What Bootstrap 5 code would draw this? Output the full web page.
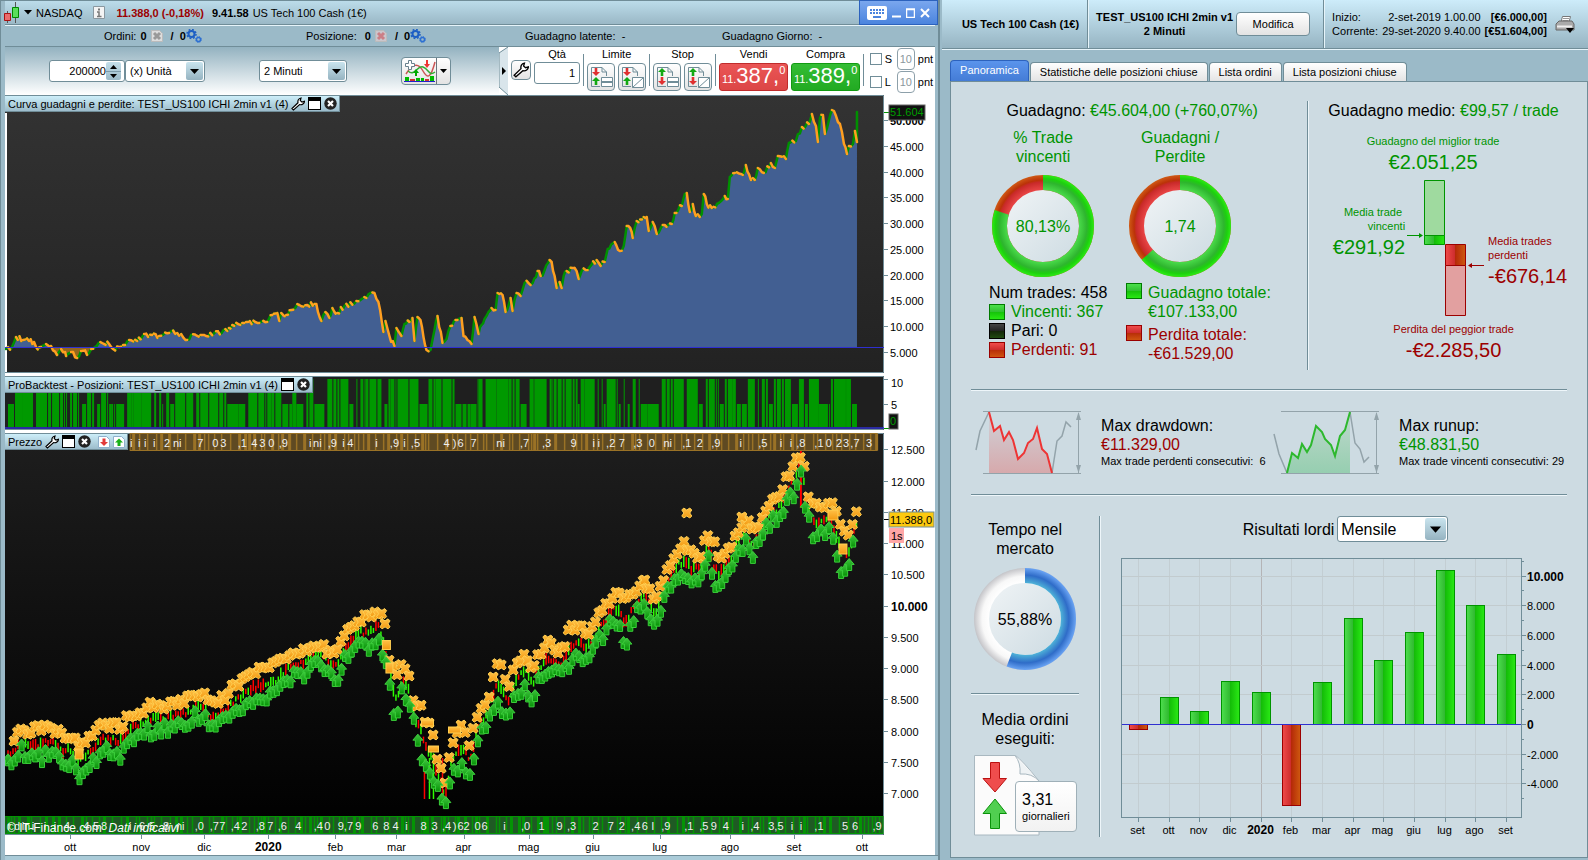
<!DOCTYPE html>
<html lang="it">
<head>
<meta charset="utf-8">
<meta name="viewport" content="width=device-width, initial-scale=1">
<title>NASDAQ - ProBacktest</title>
<link rel="stylesheet" href="https://cdn.jsdelivr.net/npm/bootstrap@5.3.0/dist/css/bootstrap.min.css">
<style>
:root{--steel:#9bbac8;--line:#708d98;--up:#009400;--down:#9c0000;--pane:#cddbe2}
body{font:11px/14px "Liberation Sans",Arial,sans-serif;color:#000;background:var(--steel);min-height:100vh}
svg{display:block}
svg text{font-family:"Liberation Sans",Arial,sans-serif}
.t-up{color:var(--up)}.t-down{color:var(--down)}
.app-left{flex:0 0 59.2%;min-width:0;border-left:1px solid var(--line);border-right:2px solid var(--line);padding:0 3px 0 4px;box-shadow:inset 0 1px 0 var(--line)}
.app-right{min-width:0;margin-left:2px}
.titlebar{height:25px;background:linear-gradient(#bcdcea,#9ab8c6);border-top:1px solid var(--line);border-bottom:1px solid var(--line)}
.winbtns{width:79px;height:25px;background:linear-gradient(#7aa7ee,#4b84de);border:1px solid #2c62bd;margin-right:-3px}
.winbtns button,.bare{background:none;border:0;padding:0;line-height:0;color:inherit}
.statusrow{height:22px;background:var(--steel);border-top:1px solid #e6f4fa;border-bottom:1px solid var(--line);padding-left:99px}
.st1{width:202px}.st2{width:219px}.st3{width:197px}
.toolrow{height:48px;background:linear-gradient(#93b2c0,#fff);padding-left:44px}
.spaced{margin-left:54px}
.boxed{height:22px;border:1px solid var(--line);border-radius:3px;background-color:#fff;font-size:11px;line-height:14px;padding:0 4px;color:#000}
.qbox{width:76px}
.qbox input{width:56px;border:0;text-align:right;padding:0;outline:0;font-size:11px;background:none}
.spin{width:15px;height:18px;background:linear-gradient(#c4dfea,#9bbac8);border-radius:2px}
select.picker{appearance:none;background:#fff url("data:image/svg+xml,%3Csvg xmlns='http://www.w3.org/2000/svg' width='17' height='18'%3E%3Cdefs%3E%3ClinearGradient id='g' x2='0' y2='1'%3E%3Cstop stop-color='%23c9e4ee'/%3E%3Cstop offset='1' stop-color='%2395b3c1'/%3E%3C/linearGradient%3E%3C/defs%3E%3Crect width='17' height='18' rx='2' fill='url(%23g)'/%3E%3Cpath d='M4 7h9l-4.500 5z'/%3E%3C/svg%3E") no-repeat right 1px center}
.softbtn{border:1px solid var(--line);border-radius:4px;background:linear-gradient(#fff,#e3e3e3);padding:0;color:#000;font-size:11px;line-height:14px}
.trade{width:436px;background:#fff;padding-right:2px}
.trade .lab{height:15px;text-align:center}
.vsep{width:1px;height:32px;background:var(--line);margin:7px 3px 0}
.ord{width:28px;height:28px;margin-top:1px}
.deal{width:69px;height:28px;border:1px solid #c02c2c;border-radius:3px;color:#fff;background:linear-gradient(#ea5555,#dc4646);padding:0;margin-top:1px;font-size:11px;line-height:24px;white-space:nowrap}
.deal.buy{border-color:#129a12;background:linear-gradient(#34bd34,#22aa22)}
.deal b{font-weight:400;font-size:22px}.deal sup{font-size:11px;top:-9px}
.sl input[type=checkbox]{width:12px;height:12px;margin:0;appearance:none;border:1px solid var(--line);background:#fff}
.sl input[type=text]{width:18px;height:22px;border:1px solid #8da0aa;border-radius:4px;padding:0;text-align:center;color:#8a979d;font-size:11px;background:#fff}
.sl{height:23px;gap:3px}
.charts{background:#fff}
.pane{position:relative}
.pane>svg{position:absolute;left:0;top:0}
.tag{position:absolute;left:0;top:0;height:17px;padding:0 2px 0 3px;gap:3px;background:linear-gradient(#cdeef9,#9cbccb);border:1px solid var(--line);border-left:0;white-space:nowrap;z-index:1}
.p1{height:278px}.p2{height:54px;margin-top:3px}.p3{flex:1 1 402px;min-height:402px;margin-top:3px}.p4{height:20px}
.copy{position:absolute;left:2px;bottom:-1px;color:#fff;font-size:12px;line-height:16px}
.foot{height:5px;background:#aacbd8;border-top:1px solid var(--line);margin:0 -3px 0 0}
.rhead{height:49px;background:linear-gradient(#cdecfa,#96b4c2);border-bottom:1px solid var(--line);box-shadow:0 1px 0 #e6f4fa;white-space:nowrap}
.rhead>div{border-right:1px solid var(--line);box-shadow:1px 0 0 #e6f4fa;height:48px}
.rhead>div:last-child{border:0;box-shadow:none;padding-right:5px}
.h1c{width:146px}.h2c{width:236px;padding:0 13px 0 8px}
.tabs{padding:11px 0 0 8px;height:32px}
.tabs .nav-link{border:1px solid var(--line);border-bottom:0;border-radius:4px 4px 0 0;background:linear-gradient(#fff,#e4e4e4);color:#000;font-size:11px;line-height:14px;padding:2px 9px;height:19px;margin:2px 1px 0 0}
.tabs .nav-link.active{background:linear-gradient(#5a94ec,#447cd6);border-color:#2c62bd;color:#fff;height:21px;margin-top:0}
.report{margin:0 0 2px 8px;border:1px solid var(--line);background:var(--pane);padding:0 20px}
.big{font-size:16px;line-height:19px}
.huge{font-size:20px;line-height:24px;margin-top:2px}
.etch{border-right:1px solid var(--line);box-shadow:1px 0 0 #eef6fa}
.etch-b{border-bottom:1px solid var(--line);box-shadow:0 1px 0 #eef6fa}
.sec1{height:308px;padding:19px 0 19px}
.sec1a{width:337px;padding-left:18px}
.net{padding-right:32px}
.subs{margin-top:8px}
.sub{width:137px}.sub .cap{width:108px}
.sub>svg{margin:9px 0 6px 3px}
.sw{width:16px;height:16px;flex:none;border:1px solid;margin-right:6px}
.sw.g{border-color:#007b00;background:linear-gradient(#4be04b,#30c030 50%,#16c30a 52%,#28e813)}
.sw.k{border-color:#000;background:linear-gradient(#444,#222 50%,#14270a 52%,#1f4a10)}
.sw.r{border-color:#900;background:linear-gradient(#f04c4c,#cc2c2c 50%,#b92f08 52%,#cf5510)}
.extremes{grid-template-columns:97px 80px 1fr;margin:1px 0}
.sec2{height:105px;padding-top:21px}
.sec2>div{flex:0 0 50%;white-space:nowrap}
.sec2 svg{margin:0 20px 0 4px}
.sec2 .words{padding-top:5px}
.sec3{padding:21px 0 0}
.sec3a{width:129px;height:321px}
.sec3a .in{width:108px}
.perday{width:62px;height:51px;left:41px;top:26px;border:1px solid #9fb0b8;border-radius:4px;background:linear-gradient(#fff,#f2f2f2);padding:8px 6px}
select.picker.big{width:111px;height:26px;font-size:16px;line-height:19px;padding:0 3px;background-size:21px 22px}
#months{height:285px;margin:16px -20px 0 -3px}
</style>
</head>
<body class="d-flex">
<svg width="0" height="0" class="position-absolute" aria-hidden="true">
<defs>
<linearGradient id="gUp" x2="1"><stop stop-color="#4edf4e"/><stop offset=".48" stop-color="#2fb82f"/><stop offset=".5" stop-color="#14bd08"/><stop offset="1" stop-color="#2aea15"/></linearGradient>
<linearGradient id="gDn" x2="1"><stop stop-color="#f04a4a"/><stop offset=".48" stop-color="#cc2c2c"/><stop offset=".5" stop-color="#b52a08"/><stop offset="1" stop-color="#cf5a10"/></linearGradient>
<linearGradient id="gHub" x2="1" y2="1"><stop stop-color="#f0f4f6"/><stop offset="1" stop-color="#cddbe2"/></linearGradient>
<linearGradient id="gBlk" x2="0" y2="1"><stop stop-color="#333"/><stop offset="1" stop-color="#222"/></linearGradient>
<linearGradient id="gBlk2" x2="0" y2="1"><stop stop-color="#1e1e1e"/><stop offset="1" stop-color="#000"/></linearGradient>
<linearGradient id="gX" x2="0" y2="1"><stop stop-color="#ffc045"/><stop offset="1" stop-color="#f39a12"/></linearGradient>
<linearGradient id="gA" x2="0" y2="1"><stop stop-color="#3fc43f"/><stop offset="1" stop-color="#069206"/></linearGradient>
<radialGradient id="rG" gradientUnits="userSpaceOnUse" cx="51" cy="51" r="51"><stop offset=".7" stop-color="#4cdd4c"/><stop offset=".86" stop-color="#2eb52e"/><stop offset=".93" stop-color="#1dd00e"/><stop offset="1" stop-color="#2cec16"/></radialGradient>
<radialGradient id="rR" gradientUnits="userSpaceOnUse" cx="51" cy="51" r="51"><stop offset=".7" stop-color="#ea4747"/><stop offset=".86" stop-color="#c92a2a"/><stop offset=".9" stop-color="#bb3208"/><stop offset="1" stop-color="#cf5a16"/></radialGradient>
<radialGradient id="rB" gradientUnits="userSpaceOnUse" cx="51" cy="51" r="51"><stop offset=".7" stop-color="#4fb4d8"/><stop offset=".86" stop-color="#2f6cc8"/><stop offset="1" stop-color="#6aa4f4"/></radialGradient>
<radialGradient id="rW" gradientUnits="userSpaceOnUse" cx="51" cy="51" r="51"><stop offset=".7" stop-color="#fff"/><stop offset=".84" stop-color="#f8f8f8"/><stop offset="1" stop-color="#c4c4c8"/></radialGradient>
<symbol id="cross" viewBox="-6 -6 12 12" overflow="visible"><path d="M-5-3-3-5 0-3 3-5 5-3 3 0 5 3 3 5 0 3-3 5-5 3-3 0z" fill="url(#gX)" stroke="#ffcf52"/></symbol>
<symbol id="arrow" viewBox="-6 -6 12 12" overflow="visible"><path d="M0-6 5 0H2.500V6H-2.500V0H-5z" fill="url(#gA)" stroke="#3ccf3c"/></symbol>
<symbol id="gears" viewBox="0 0 16 14"><circle cx="5.500" cy="5" r="3" fill="none" stroke="#1d5fc4" stroke-width="2"/><circle cx="5.500" cy="5" r="4.500" fill="none" stroke="#1d5fc4" stroke-width="1.500" stroke-dasharray="1.800 1.734"/><circle cx="12.500" cy="10.500" r="2" fill="none" stroke="#2c6fd2" stroke-width="1.400"/><circle cx="12.500" cy="10.500" r="3" fill="none" stroke="#2c6fd2" stroke-dasharray="1.200 1.150"/></symbol>
<symbol id="wrench" viewBox="0 0 14 14"><path d="M2.500 13 1 11.500 7 5.800C6.500 3.500 7.500 1.500 10 1L9.300 3.600 11 5l2.500-.8C13.300 6.500 11.200 8.200 8.600 7.600z" fill="#fff" stroke="#000" stroke-width="1.200"/></symbol>
<symbol id="winic" viewBox="0 0 13 13"><rect x=".5" y=".5" width="12" height="12" fill="#fff" stroke="#000"/><path d="M1 1h11v3H1z"/></symbol>
<symbol id="closeic" viewBox="0 0 13 13"><circle cx="6.500" cy="6.500" r="6.200" fill="#222"/><path d="M4 4l5 5M9 4 4 9" stroke="#fff" stroke-width="2.200"/></symbol>
<symbol id="pgdn" viewBox="0 0 12 12"><path d="M.5.500h8l3 3v8H.5z" fill="#fff" stroke="#8fb0cc"/><path d="M4.500 2.500h3V6H10L6 10 2 6h2.500z" fill="#e23a3a"/></symbol>
<symbol id="pgup" viewBox="0 0 12 12"><path d="M.5.500h8l3 3v8H.5z" fill="#fff" stroke="#8fb0cc"/><path d="M4.500 10h3V6.500H10L6 2.500 2 6.500h2.500z" fill="#18b018"/></symbol>
<symbol id="page" viewBox="0 0 26 26"><path d="M3.500 22.500V3.500H14L18.500 8v4M14 3.500V8h4.500M3.500 22.500H12" fill="none" stroke="#708d98"/></symbol>
<symbol id="dn" viewBox="0 0 8 8"><path d="M2.700 0h2.600v4H8L4 8 0 4h2.700z" fill="#e03030"/></symbol>
<symbol id="up" viewBox="0 0 8 8"><path d="M2.700 8h2.600V4H8L4 0 0 4h2.700z" fill="#12a812"/></symbol>
<symbol id="okbox" viewBox="0 0 26 26"><path d="M13.500 13.500h11v9h-11z" fill="#fff" stroke="#708d98"/><path d="M13 18h12" stroke="#708d98" stroke-width="2"/></symbol>
<symbol id="slbox" viewBox="0 0 26 26"><path d="M13.500 13.500h11v10h-11zM13.500 23.500l11-10" fill="#fff" stroke="#708d98"/></symbol>
</defs>
</svg>

<main class="app-left d-flex flex-column">
  <header class="titlebar d-flex align-items-center">
    <svg width="16" height="21" viewBox="0 0 16 21" style="margin-left:-1px"><path d="M3.500 9v12M11.500 0v21" stroke="#555"/><path d="M.5 11.500h6v7h-6z" fill="#ea6b6b" stroke="#a11"/><path d="M8.500 5.500h6v10h-6z" fill="#5ade5a" stroke="#080"/></svg>
    <button class="bare ms-1" aria-label="Strumenti"><svg width="8" height="5"><path d="M0 0h8L4 4.500z"/></svg></button>
    <span class="ms-1">NASDAQ</span>
    <svg width="12" height="13" style="margin:0 11px"><path d="M.5.500h11v12H.5z" fill="#f4f4f4" stroke="#8a98a0"/><path d="M5 2.500h2v2H5z" fill="#777"/><path d="M4 6h2v4M4 10.500h4.500" stroke="#777" stroke-width="1.500" fill="none"/></svg>
    <b class="t-down">11.388,0 (-0,18%)</b><b class="ms-2">9.41.58</b><span class="ms-1">US Tech 100 Cash (1€)</span>
    <div class="winbtns ms-auto d-flex align-items-center justify-content-around px-1">
      <button aria-label="Tastiera"><svg width="20" height="14"><rect width="20" height="14" rx="2" fill="#fff"/><path d="M3 4h14M3 7h14" stroke="#4b84de" stroke-width="2" stroke-dasharray="2 1"/><path d="M6 11h8" stroke="#4b84de" stroke-width="2"/></svg></button>
      <button aria-label="Riduci"><svg width="9" height="12"><path d="M0 9.500h9" stroke="#fff" stroke-width="2"/></svg></button>
      <button aria-label="Ingrandisci"><svg width="9" height="10"><path d="M.5 1.500h8v8h-8z M0 1h9" fill="none" stroke="#fff" stroke-width="1.500"/></svg></button>
      <button aria-label="Chiudi"><svg width="10" height="10"><path d="M1 1l8 8M9 1 1 9" stroke="#fff" stroke-width="2"/></svg></button>
    </div>
  </header>
  <div class="statusrow d-flex align-items-center">
    <div class="st1 d-flex align-items-center">Ordini:<b class="mx-1">0</b><svg width="12" height="12"><path d="M.5.500h8l3 3v8H.5z" fill="#ddd" stroke="#bbb"/><path d="M3 3l6 6M9 3 3 9" stroke="#999" stroke-width="3"/></svg><b class="ms-2">/&nbsp; 0</b><svg width="16" height="14"><use href="#gears"/></svg></div>
    <div class="st2 d-flex align-items-center">Posizione:<b class="mx-1 ps-1">0</b><svg width="12" height="12"><path d="M.5.500h8l3 3v8H.5z" fill="#cbc6cc" stroke="#bbb"/><path d="M3 3l6 6M9 3 3 9" stroke="#cc7f86" stroke-width="3"/></svg><b class="ms-2">/&nbsp; 0</b><svg width="16" height="14"><use href="#gears"/></svg></div>
    <div class="st3">Guadagno latente:&nbsp; -</div><div>Guadagno Giorno:&nbsp; -</div>
  </div>
  <div class="toolrow d-flex">
    <div class="d-flex align-items-center">
      <div class="boxed qbox d-flex align-items-center p-0"><input value="200000" aria-label="Numero di barre"><span class="spin ms-auto me-1"><svg width="15" height="18"><path d="M4 7h7L7.500 3zM4 12h7l-3.500 4z"/><path d="M0 9.500h15" stroke="#7d9caa"/></svg></span></div>
      <select class="boxed picker" style="width:80px" aria-label="Unità"><option>(x) Unità</option></select>
      <select class="boxed picker spaced" style="width:88px" aria-label="Intervallo"><option>2 Minuti</option></select>
      <div class="softbtn d-flex align-items-center spaced" style="width:50px;height:28px">
        <button class="bare" style="padding-left:2px" aria-label="Aggiungi indicatore"><svg width="32" height="24"><path d="M0 22.500h31" stroke="#22c"/><path d="M1 18h4v4H1zM12 19h4v3h-4zM17 19h3v3h-3zM26 17h4v5h-4z" fill="#0b0"/><path d="M6 20h5v2H6zM21 20h4v2h-4z" fill="#c33"/><path d="M2 15C8 5 14 3 19 12s8 6 12-9" fill="none" stroke="#c55" stroke-width="1.500"/><path d="M4 12c7 6 9-6 15-4s6 10 12 5" fill="none" stroke="#3a3" stroke-width="1.500"/><path d="M4.500 1.500h3v3h3v3h-3v3h-3v-3h-3v-3h3z" fill="#fff" stroke="#68808c"/><path d="M11 17v-3H9l3-4 3 4h-2v3z" fill="#0a0"/><path d="M22 1v4h-2l3 4 3-4h-2V1z" fill="#e33"/></svg></button>
        <button class="bare border-start border-secondary ms-auto h-100" style="width:14px" aria-label="Altri indicatori"><svg width="7" height="5" class="mx-auto"><path d="M0 0h7L3.500 4z"/></svg></button>
      </div>
    </div>
    <div class="trade d-flex ms-auto">
      <svg width="11" height="48"><path d="M9 0 0 6v34l9 8" fill="#d9e5eb" stroke="#708d98"/><path d="M3 20v8l4-4z"/></svg>
      <button class="softbtn" style="width:20px;height:20px;margin:13px 3px 0 1px" aria-label="Impostazioni"><svg width="16" height="16" class="mx-auto"><use href="#wrench"/></svg></button>
      <div><label class="lab d-block" for="qta">Qtà</label><input id="qta" class="boxed text-end" style="width:46px" value="1"></div>
      <div class="vsep"></div>
      <div><div class="lab">Limite</div><div class="d-flex" style="gap:3px"><button class="softbtn ord" aria-label="Limite"><svg width="26" height="26"><use href="#page"/><use href="#dn" x="4" y="4" width="8" height="8"/><use href="#up" x="4" y="13" width="8" height="8"/><use href="#okbox"/></svg></button><button class="softbtn ord" aria-label="Limite con stop"><svg width="26" height="26"><use href="#page"/><use href="#dn" x="4" y="4" width="8" height="8"/><use href="#up" x="4" y="13" width="8" height="8"/><use href="#slbox"/></svg></button></div></div>
      <div class="vsep"></div>
      <div><div class="lab">Stop</div><div class="d-flex" style="gap:3px"><button class="softbtn ord" aria-label="Stop"><svg width="26" height="26"><use href="#page"/><use href="#up" x="4" y="4" width="8" height="8"/><use href="#dn" x="4" y="13" width="8" height="8"/><use href="#okbox"/></svg></button><button class="softbtn ord" aria-label="Stop con limite"><svg width="26" height="26"><use href="#page"/><use href="#up" x="4" y="4" width="8" height="8"/><use href="#dn" x="4" y="13" width="8" height="8"/><use href="#slbox"/></svg></button></div></div>
      <div class="vsep"></div>
      <div style="margin-right:3px"><div class="lab">Vendi</div><button class="deal">11.<b>387,</b><sup>0</sup></button></div>
      <div><div class="lab">Compra</div><button class="deal buy">11.<b>389,</b><sup>0</sup></button></div>
      <div class="vsep"></div>
      <div class="ms-auto">
        <div class="sl d-flex align-items-center"><input type="checkbox" id="cs"><label for="cs" style="width:9px">S</label><input type="text" value="10" aria-label="Punti stop">pnt</div>
        <div class="sl d-flex align-items-center"><input type="checkbox" id="cl"><label for="cl" style="width:9px">L</label><input type="text" value="10" aria-label="Punti limite">pnt</div>
      </div>
    </div>
  </div>
  <div class="charts flex-grow-1 d-flex flex-column">
    <section class="pane p1" id="equity"><div class="tag d-flex align-items-center">Curva guadagni e perdite: TEST_US100 ICHI 2min v1 (4) <svg width="14" height="14"><use href="#wrench"/></svg><svg width="13" height="13"><use href="#winic"/></svg><svg width="13" height="13"><use href="#closeic"/></svg></div></section>
    <section class="pane p2" id="positions"><div class="tag d-flex align-items-center">ProBacktest - Posizioni: TEST_US100 ICHI 2min v1 (4) <svg width="13" height="13"><use href="#winic"/></svg><svg width="13" height="13"><use href="#closeic"/></svg></div></section>
    <section class="pane p3" id="price"><div class="tag d-flex align-items-center">Prezzo <svg width="14" height="14"><use href="#wrench"/></svg><svg width="13" height="13"><use href="#winic"/></svg><svg width="13" height="13"><use href="#closeic"/></svg><svg width="12" height="12" class="ms-1"><use href="#pgdn"/></svg><svg width="12" height="12"><use href="#pgup"/></svg></div>
    <div class="copy">© IT-Finance.com &nbsp;<i>Dati indicativi</i></div></section>
    <section class="pane p4" id="timeaxis"></section>
  </div>
  <div class="foot"></div>
</main>

<aside class="app-right flex-grow-1 d-flex flex-column">
  <header class="rhead d-flex">
    <div class="h1c flex-shrink-0 d-flex align-items-center justify-content-end pe-2"><b>US Tech 100 Cash (1€)</b></div>
    <div class="h2c flex-shrink-0 d-flex align-items-center justify-content-between"><b class="text-center">TEST_US100 ICHI 2min v1<br>2 Minuti</b><button class="softbtn" style="width:74px;height:24px">Modifica</button></div>
    <div class="flex-grow-1 d-flex align-items-center ps-2">
      <div>Inizio:<br>Corrente:</div><div class="text-end ms-auto">2-set-2019 1.00.00<br>29-set-2020 9.40.00</div><b class="text-end ms-1">[€6.000,00]<br>[€51.604,00]</b>
      <button class="bare mx-2" aria-label="Stampa"><svg width="20" height="17"><path d="M6 6 7.500.500h8L14 6" fill="#fff" stroke="#777"/><path d="M8 2.500h6M7.500 4.500h6" stroke="#999"/><path d="M1 8l3-3h13l2 3v6H1z" fill="#aaa" stroke="#666"/><path d="M2 10.500h15" stroke="#eee" stroke-width="2"/><path d="M11 12h8l-4 5z"/></svg></button>
    </div>
  </header>
  <nav class="tabs nav align-items-end flex-nowrap text-nowrap"><a class="nav-link active" href="#">Panoramica</a><a class="nav-link" href="#">Statistiche delle posizioni chiuse</a><a class="nav-link" href="#">Lista ordini</a><a class="nav-link" href="#">Lista posizioni chiuse</a></nav>
  <div class="report flex-grow-1">
    <section class="sec1 etch-b d-flex">
      <div class="sec1a etch">
        <div class="big text-center net">Guadagno: <span class="t-up">€45.604,00 (+760,07%)</span></div>
        <div class="d-flex big subs">
          <div class="sub">
            <div class="cap text-center t-up">% Trade<br>vincenti</div>
            <svg width="102" height="102" data-ring="80.130" data-a="rG" data-b="rR" data-c="#009400">80,13%</svg>
            <div>Num trades: 458</div>
            <div class="d-flex align-items-center t-up"><i class="sw g"></i>Vincenti: 367</div>
            <div class="d-flex align-items-center"><i class="sw k"></i>Pari: 0</div>
            <div class="d-flex align-items-center t-down"><i class="sw r"></i>Perdenti: 91</div>
          </div>
          <div class="sub text-nowrap">
            <div class="cap text-center t-up">Guadagni /<br>Perdite</div>
            <svg width="102" height="102" data-ring="63.520" data-a="rG" data-b="rR" data-c="#009400">1,74</svg>
            <div class="d-flex t-up"><i class="sw g"></i><span>Guadagno totale:<br>€107.133,00</span></div>
            <div class="d-flex t-down mt-1"><i class="sw r"></i><span>Perdita totale:<br>-€61.529,00</span></div>
          </div>
        </div>
      </div>
      <div class="flex-grow-1 text-center" style="margin-right:-20px">
        <div class="big pe-2">Guadagno medio: <span class="t-up">€99,57 / trade</span></div>
        <div class="t-up" style="margin:14px 29px 0 0">Guadagno del miglior trade<div class="huge">€2.051,25</div></div>
        <div class="d-grid extremes">
          <div class="t-up text-end" style="padding-top:30px">Media trade&nbsp;<br>vincenti<div class="huge">€291,92</div></div>
          <svg width="80" height="146"><path d="M19.500 5.500h20v55h-20z" fill="#9fda9f" stroke="#009400"/><path d="M19.500 60.500h20v9h-20z" fill="url(#gUp)" stroke="#009400"/><path d="M40.500 69.500h20v21h-20z" fill="url(#gDn)" stroke="#9c0000"/><path d="M40.500 90.500h20v50h-20z" fill="#e2a0a0" stroke="#9c0000"/><path d="M2 60.500h12" stroke="#009400"/><path d="M14 58v5l4-2.500z" fill="#009400"/><path d="M67 90.500h12" stroke="#9c0000"/><path d="M67 88v5l-4-2.500z" fill="#9c0000"/></svg>
          <div class="t-down text-start" style="padding:59px 0 0 3px">Media trades<br>perdenti<div class="huge">-€676,14</div></div>
        </div>
        <div class="t-down" style="padding-left:12px">Perdita del peggior trade<div class="huge">-€2.285,50</div></div>
      </div>
    </section>
    <section class="sec2 etch-b d-flex">
      <div class="d-flex"><svg width="106" height="64"><defs><linearGradient id="fr" x2="0" y2="1"><stop stop-color="#d88" stop-opacity=".1"/><stop offset="1" stop-color="#d88" stop-opacity=".6"/></linearGradient></defs><path d="M8 .500h98M8 62.500h98" stroke="#93a3aa"/><path d="M103.500 2v60" stroke="#93a3aa"/><path d="M101 9h5l-2.500-8zM101 54h5l-2.500 8z" fill="#93a3aa"/><path d="M14 1 19 20 25 15 29 29 34 21 38 29 43 48 49 42 53 32 58 28 62 17 67 38 72 43 77 62H14z" fill="url(#fr)"/><path d="M1 39 5 20 14 1M77 62 82 30 87 25 91 11 96 16" fill="none" stroke="#93a3aa" stroke-width="1.500"/><path d="M14 1 19 20 25 15 29 29 34 21 38 29 43 48 49 42 53 32 58 28 62 17 67 38 72 43 77 62" fill="none" stroke="#ee3434" stroke-width="2"/></svg>
        <div class="words"><div class="big">Max drawdown:<br><span class="t-down">€11.329,00</span></div>Max trade perdenti consecutivi:&nbsp; 6</div></div>
      <div class="d-flex"><svg width="106" height="64"><defs><linearGradient id="fg" x2="0" y2="1"><stop stop-color="#4b4" stop-opacity=".1"/><stop offset="1" stop-color="#4b6" stop-opacity=".4"/></linearGradient></defs><path d="M8 .500h98M8 62.500h98" stroke="#93a3aa"/><path d="M103.500 2v60" stroke="#93a3aa"/><path d="M101 9h5l-2.500-8zM101 54h5l-2.500 8z" fill="#93a3aa"/><path d="M14 62 19 42 25 47 29 33 34 41 38 34 43 15 49 21 52 28 58 34 62 45 67 25 72 19 77 1V62z" fill="url(#fg)"/><path d="M1 23 6 43 14 62M77 1 82 32 87 38 91 51 96 46" fill="none" stroke="#93a3aa" stroke-width="1.500"/><path d="M14 62 19 42 25 47 29 33 34 41 38 34 43 15 49 21 52 28 58 34 62 45 67 25 72 19 77 1" fill="none" stroke="#2db82d" stroke-width="2"/></svg>
        <div class="words"><div class="big">Max runup:<br><span class="t-up">€48.831,50</span></div>Max trade vincenti consecutivi: 29</div></div>
    </section>
    <section class="sec3 d-flex">
      <div class="sec3a etch flex-shrink-0"><div class="in">
        <div class="big text-center pt-1">Tempo nel<br>mercato</div>
        <svg style="margin:10px 0 0 3px" width="102" height="102" data-ring="55.880" data-a="rB" data-b="rW" data-c="#000">55,88%</svg>
        <div class="etch-b" style="padding-top:23px"></div>
        <div class="big text-center" style="padding-top:16px">Media ordini<br>eseguiti:</div>
        <div class="position-relative" style="margin:7px 0 0 3px"><svg width="66" height="81"><path d="M.5.500h41Q48 5 65 26V80H.5z" fill="#fbfbfb" stroke="#a9b8c0"/><path d="M41 .500Q47 8 46 19q12-1 19 7" fill="#eef2f4" stroke="#a9b8c0"/><path d="M16.500 7.500h9v16h7L21 37 9 23.500h7.500z" fill="#ef4d4d" stroke="#b11"/><path d="M16.500 73.500h9v-15h7L21 44 9 58.500h7.500z" fill="#50cf50" stroke="#0a920a"/></svg>
          <div class="perday position-absolute"><div class="big">3,31</div>giornalieri</div></div>
      </div></div>
      <div class="flex-grow-1 ps-4" style="min-width:0">
        <div class="d-flex justify-content-center align-items-center big" style="gap:3px"><label for="per">Risultati lordi</label><select id="per" class="boxed picker big"><option>Mensile</option></select></div>
        <div class="pane" id="months"></div>
      </div>
    </section>
  </div>
</aside>

<script src="https://cdn.jsdelivr.net/npm/bootstrap@5.3.0/dist/js/bootstrap.bundle.min.js"></script>
<script>
const AX = 51, BASE_W = 878;
function rng(s){return ()=>{s=(s*1664525+1013904223)>>>0;return s/4294967296}}
const L=(x1,y1,x2,y2,c,w=1)=>`<path d="M${x1} ${y1}L${x2} ${y2}" stroke="${c}" stroke-width="${w}"/>`;
const T=(x,y,t,o='')=>`<text x="${x}" y="${y}" font-size="11" ${o}>${t}</text>`;
const R=(x,y,w,h,f,o='')=>`<rect x="${x}" y="${y}" width="${w}" height="${h}" fill="${f}" ${o}/>`;
const pts=s=>s.trim().split(/\s+/).map(p=>p.split(',').map(Number));
function at(p,x){for(let i=1;i<p.length;i++)if(x<=p[i][0]){const a=p[i-1],b=p[i];return a[1]+(b[1]-a[1])*(x-a[0])/((b[0]-a[0])||1)}return p[p.length-1][1]}
function put(id,s){const e=document.getElementById(id),o=e.querySelector(':scope>svg');if(o)o.remove();
 e.insertAdjacentHTML('afterbegin',`<svg width="${e.clientWidth}" height="${e.clientHeight}">${s}</svg>`)}
function dims(id){const e=document.getElementById(id);return [e.clientWidth-AX,e.clientHeight,(e.clientWidth-AX)/BASE_W]}

const EQ=pts(`2,253 8,251 12,241 19,244 25,245 30,246 32,251 37,251 42,248 47,250 53,259 57,253 61,256 62,260 67,256 73,262 77,255 85,257 91,251 98,247 105,248 109,253 115,251 121,249 125,244 133,245 140,238 148,239 155,240 165,237 173,237 183,244 187,239 200,239 210,237 223,235 228,229 240,227 251,226 263,226 268,219 273,217 275,225 277,217 282,219 287,214 295,209 303,209 312,208 317,225 321,216 325,222 328,212 333,217 340,210 352,205 362,202 370,197 374,206 379,236 381,225 385,240 390,250 392,232 397,240 400,228 405,226 408,222 410,245 413,221 416,224 419,241 422,254 426,254 430,234 433,220 438,247 442,243 446,230 451,224 457,222 459,240 463,244 467,248 470,221 474,238 477,229 480,223 484,216 487,212 491,214 493,197 498,199 501,216 506,202 508,215 512,197 516,200 520,187 528,187 533,175 536,180 540,174 545,164 547,166 550,180 552,192 555,186 557,192 559,180 562,175 570,172 574,183 577,175 585,171 592,164 596,170 600,166 603,153 610,146 615,155 619,150 622,130 627,136 628,142 632,125 639,121 642,121 644,135 648,126 652,138 660,129 667,128 670,117 677,110 680,98 682,97 685,116 688,108 691,120 697,118 699,98 702,108 707,112 714,107 720,100 723,103 725,81 730,77 738,79 741,69 746,84 750,84 753,72 759,77 766,67 770,72 773,60 781,63 784,47 791,45 797,31 804,28 807,18 811,30 813,46 815,22 818,19 820,38 824,24 827,14 829,15 833,26 835,28 837,36 839,48 842,58 844,50 848,48 850,35 852,46 854,30 856,16`);
const CROSS=pts(`8,307 12,300 23,299 33,297 43,294 55,302 65,303 75,312 85,305 98,293 115,294 125,283 137,283 145,274 160,273 180,269 195,260 207,272 220,265 230,253 245,243 255,238 270,233 280,226 290,220 300,217 313,211 323,219 333,217 340,202 350,191 360,184 368,181 375,180 380,195 384,229 392,246 395,231 403,238 407,271 413,270 420,288 427,299 433,331 440,350 445,315 450,300 458,294 464,314 470,288 472,286 479,274 484,266 487,243 492,232 498,239 503,255 510,232 520,220 525,234 533,225 543,210 550,219 557,218 562,203 566,195 575,197 583,199 592,184 602,173 610,162 620,168 630,160 638,149 650,167 656,153 659,139 668,127 679,110 685,121 695,123 700,104 709,109 713,128 719,118 725,115 730,99 737,96 741,87 748,99 754,91 763,73 772,67 780,47 787,34 793,26 797,18 800,53 804,67 811,73 816,73 824,71 832,82 836,98 842,108 848,92 851,76 856,71`);
const ARR=pts(`3,331 9,328 17,317 27,327 37,325 47,320 57,334 68,328 74,343 85,333 100,315 115,323 125,306 140,299 160,297 180,290 198,281 206,298 225,286 245,268 260,266 273,260 282,245 300,241 313,229 322,238 333,247 340,226 355,210 365,215 373,203 381,238 386,257 390,292 397,258 406,278 413,313 420,338 430,354 440,372 446,345 455,332 465,342 470,317 473,302 482,294 490,272 502,282 512,258 522,258 527,268 535,244 548,239 556,243 570,223 580,227 595,207 607,187 615,192 619,215 630,180 640,175 650,195 658,167 667,146 675,142 685,148 695,143 703,127 708,156 720,148 730,119 740,112 747,125 755,102 770,85 780,72 790,57 795,37 800,77 807,102 815,103 823,92 828,115 833,137 842,137 849,103`);
const XL=[['ott',65],['nov',136],['dic',199],['2020',263],['feb',330],['mar',391],['apr',458],['mag',523],['giu',587],['lug',654],['ago',724],['set',788],['ott',856]];
const TOPS='126i 134i 140i 149i 162:2 172:ni 195:7 210:0 218:3 237:,1 249:4 257:3 266:0 278:,9 305i 312:ni 327:,9 338i 345:4 371i 389:,9 399i 410:,5 441:4 449:) 455:6 468:7 495:ni 519:,7 541:,3 568:9 588i 593i 605:,2 616:7 632:,3 646:0 662:ni 681:,1 694:2 710:,9 735i 757:,5 775i 785i 795:,8 813:,1 823:0 833:2 840:3 849:,7 863:3';
const BOTS='4:r 12:d 18i 22:n 28i 40i 50i 62:4 80:,4 91:5 99:8 125i 137:6 147:5 161:8 175:ni 194:,0 209:,7 217:7 230:,4 239:2 255:,8 265:7 277:,6 293:4 313:,4 322:0 340:9,7 353:9 370:6 381:8 390:4 401i 418:8 429:3 441:,4 449:) 455:6 461:2 472:0 479:6 499i 520:,0 536:1 554:9 566:,3 590:2 605:7 616:2 630:,4 639:6 647:I 660:,9 683:,1 698:,5 708:9 720:4 737i 749:,4 770:3,5 786i 795i 813:,1 839:5 849:6 871:,9';

function frame(W,H,f){return R(0,0,W,H,f)+`<path d="M0 .500H${W-.5}V${H-.5}H0" fill="none" stroke="#708d98"/>`}
function equity(){
 const [W,H,s]=dims('equity');let o=frame(W,H,'url(#gBlk)')+R(0,18,2,H-19,'#fff');const r=rng(7);
 const z=252.5,d=[];
 for(let i=1;i<EQ.length;i++){const a=EQ[i-1],b=EQ[i],n=Math.max(1,Math.round((b[0]-a[0])/2));
  for(let k=0;k<n;k++)d.push([(a[0]+(b[0]-a[0])*k/n)-1,1+a[1]+(b[1]-a[1])*k/n+(k?(r()-.5)*5:0)])}
 const e=d.filter(p=>p[0]<=851).map(p=>[p[0]*s,p[1]]);
 e.push([851*s,17]);
 o+=`<path d="M${e[0][0]} ${z}${e.map(p=>`L${p[0]} ${Math.min(p[1],z)}`).join('')}V${z}z" fill="#425f92"/>`;
 o+=`<path d="M${e[0][0]} ${z}${e.map(p=>`L${p[0]} ${p[0]<110*s?Math.max(p[1],z):z}`).join('')}V${z}z" fill="#94661e"/>`;
 let g='',q='';for(let i=1;i<e.length;i++){const a=e[i-1],b=e[i],seg=`M${a[0]} ${a[1]}L${b[0]} ${b[1]}`;if(b[1]<a[1]-.4)g+=seg;else q+=seg}
 o+=`<g fill="none" stroke-width="2.500" stroke-linecap="round"><path d="${g}" stroke="#009000"/><path d="${q}" stroke="#ff9f20"/></g>`;
 o+=L(0,z,W,z,'#2f2fd0');
 for(let v=5;v<=50;v+=5){const y=Math.round(257+(5-v)*5.156)+.5;o+=L(W,y,W+4,y,'#708d98')+T(W+6,y+4,v+'.000',v==50?'font-weight="700"':'')}
 o+=L(W,17.5,W+5,17.5,'#009400')+R(W+5,10,36,15,'#111','stroke="#666"')+T(W+6,21,'51.604','fill="#009c00"');
 put('equity',o)}
function positions(){
 const [W,H,s]=dims('positions');let o=frame(W,H,'#1f1f1f');const r=rng(21);let x=3;
 while(x<851){const w=Math.min(851-x,r()<.4?5+Math.floor(r()*8):1+Math.floor(r()*4)),half=r()<.2,y=half?28:3;
  o+=R(x*s,y,w*s,51-y,'#009900');x+=w;const q=r();x+=q<.15?3:q<.8?1:0}
 o+=L(0,52,W,52,'#2f2fd0',1.5)+L(W,3.500,W+4,3.500,'#708d98')+L(W,28.500,W+4,28.500,'#708d98')+T(W+7,11,'10')+T(W+7,33,'5');
 o+=L(W,52.500,W+5,52.500,'#009400')+R(W+5,38,9,15,'#111','stroke="#666"')+T(W+6,49,'0','fill="#009c00"');
 put('positions',o)}
function strip(list,x0,x1,y,bg,ln,s,seed){const r=rng(seed);let o=R(x0,y,x1-x0,17,bg,`stroke="${ln}"`);
 for(let x=x0+3;x<x1;x+=3+Math.floor(r()*7))o+=L(x+.5,y,x+.5,y+17,ln,r()<.3?3:1.5);
 list.split(' ').forEach(t=>{const m=t.match(/^(\d+):?(.*)$/);o+=T(m[1]*s,y+13,m[2],'fill="#f0f0f0" text-anchor="middle"')});return o}
function price(){
 const [W,H,s]=dims('price'),k=H/402;let o=frame(W,H,'url(#gBlk2)');const r=rng(5);
 for(let x=3;x<853;x+=2.5){const a=at(CROSS,x)+9,b=at(ARR,x)-8,m=(a+b)/2+(r()-.5)*6,h=2+r()*4;o+=L(x*s,(m-h)*k,x*s,(m+h)*k,r()<.5?'#f00':'#2cff00',1.5)}
 for(const x of [419,424,428,437])o+=L(x*s,325*k,x*s,366*k,x%2?'#f00':'#2cff00',1.5);
 o+=L(795*s,16,795*s,75*k,'#f00',2);
 let X='',A='';
 for(let x=9;x<853;x+=x>378&&x<510||x>790?4:3.4){const y=at(CROSS,x)-1+(r()-.5)*8;X+=`<use href="#cross" x="${x*s-6}" y="${y*k-6}" width="12" height="12"/>`}
 for(let x=3;x<851;x+=x>378&&x<510||x>790?4:3.4){const y=at(ARR,x)+(r()-.5)*11;A+=`<use href="#arrow" x="${x*s-6}" y="${y*k-7}" width="12" height="12"/>`}
 [[681,80],[639,147],[736,84]].forEach(p=>X+=`<use href="#cross" x="${p[0]*s-6}" y="${p[1]*k-6}" width="12" height="12"/>`);
 let B='';
 [[74,321,8,10],[381,212,8,9],[384,235,7,10],[422,290,12,6],[428,316,10,6],[449,297,12,6],[827,82,10,10],[837,116,8,10]].forEach(p=>B+=R((p[0]-p[2]/2)*s,(p[1]-p[3]/2)*k,p[2],p[3],'url(#gX)','stroke="#ffcf52"'));
 o+=X+A+B;
 o+=strip(TOPS,125*s,871*s,.5,'#5f4a22','#9a7226',s,3)+strip(BOTS,0,W-1,H-18.5,'#1f5a24','#049404',s,9);
 for(let v=7000;v<=12500;v+=500){const y=Math.round((360-(v-7000)/500*31.25)*k)+.5;o+=L(W,y,W+4,y,'#708d98')+T(W+7,y+4,String(v/1000|0)+'.'+(v%1000?'500':'000'),v==10000?'font-weight="700" style="font-size:12px"':'')}
 o+=L(W,86.5*k,W+5,86.5*k,'#000')+R(W+5,79*k,45,15,'#fdc90f','stroke="#708d98"')+T(W+6,79*k+12,'11.388,0')+R(W+5,95*k,15,15,'#ffa6a6')+T(W+7,95*k+12,'1s');
 put('price',o)}
function timeaxis(){const [W,H,s]=dims('timeaxis');put('timeaxis',XL.map(([t,x])=>L(Math.round(x*s)+.5,0,Math.round(x*s)+.5,4,'#708d98')+T(x*s,16,t,'text-anchor="middle"'+(t=='2020'?' font-weight="700" style="font-size:12px"':''))).join(''))}
function months(){
 const e=document.getElementById('months'),W=e.clientWidth-66,H=260,z=166.5,u=.01485;
 const D=[['set',-350],['ott',1830],['nov',880],['dic',2920],['2020',2170],['feb',-5430],['mar',2840],['apr',7150],['mag',4320],['giu',6220],['lug',10380],['ago',8030],['set',4730]];
 const x=i=>Math.round(17+(W-32)/12*i)+.5;let o='';
 D.forEach((d,i)=>o+=L(x(i),0,x(i),H,i==4?'#b4b4b6':'#c3ced3'));
 for(let v=-4000;v<=10000;v+=2000){const y=Math.round(z-.5-v*u)+.5;o+=L(0,y,W,y,'#c2cbce')+L(W,y,W+5,y,'#708d98')+T(W+6,y+4,v?v/1000+'.000':'0',(v==0||v==10000)?'font-weight="700" style="font-size:12px"':'')}
 for(let v=-5000;v<=11000;v+=2000){const y=Math.round(z-.5-v*u)+.5;o+=L(W,y,W+3,y,'#708d98')}
 D.forEach((d,i)=>{const h=Math.round(Math.abs(d[1]*u)),up=d[1]>0;o+=R(x(i)-9,up?z-h:z,18,h,up?'url(#gUp)':'url(#gDn)',`stroke="${up?'#009400':'#9c0000'}"`)+L(x(i),H,x(i),H+4,'#708d98')+T(x(i)-1,H+16,d[0],'text-anchor="middle"'+(i==4?' font-weight="700" style="font-size:12px"':''))});
 o+=L(0,z,W,z,'#2f2fd0')+`<rect x=".5" y=".5" width="${W}" height="${H-1}" fill="none" stroke="#708d98"/>`;
 put('months',o)}
function draw(){equity();positions();price();timeaxis();months()}
document.querySelectorAll('[data-ring]').forEach(e=>{const d=e.dataset,t=e.textContent;
 e.innerHTML=`<circle cx="51" cy="51" r="37" fill="url(#gHub)"/><circle cx="51" cy="51" r="43.500" fill="none" stroke="url(#${d.b})" stroke-width="15"/><circle cx="51" cy="51" r="43.500" fill="none" stroke="url(#${d.a})" stroke-width="15" pathLength="100" stroke-dasharray="${d.ring} 100" transform="rotate(-90 51 51)"/><text x="51" y="57" font-size="16" text-anchor="middle" fill="${d.c}">${t}</text>`});
draw();addEventListener('resize',draw);
</script>
</body>
</html>
